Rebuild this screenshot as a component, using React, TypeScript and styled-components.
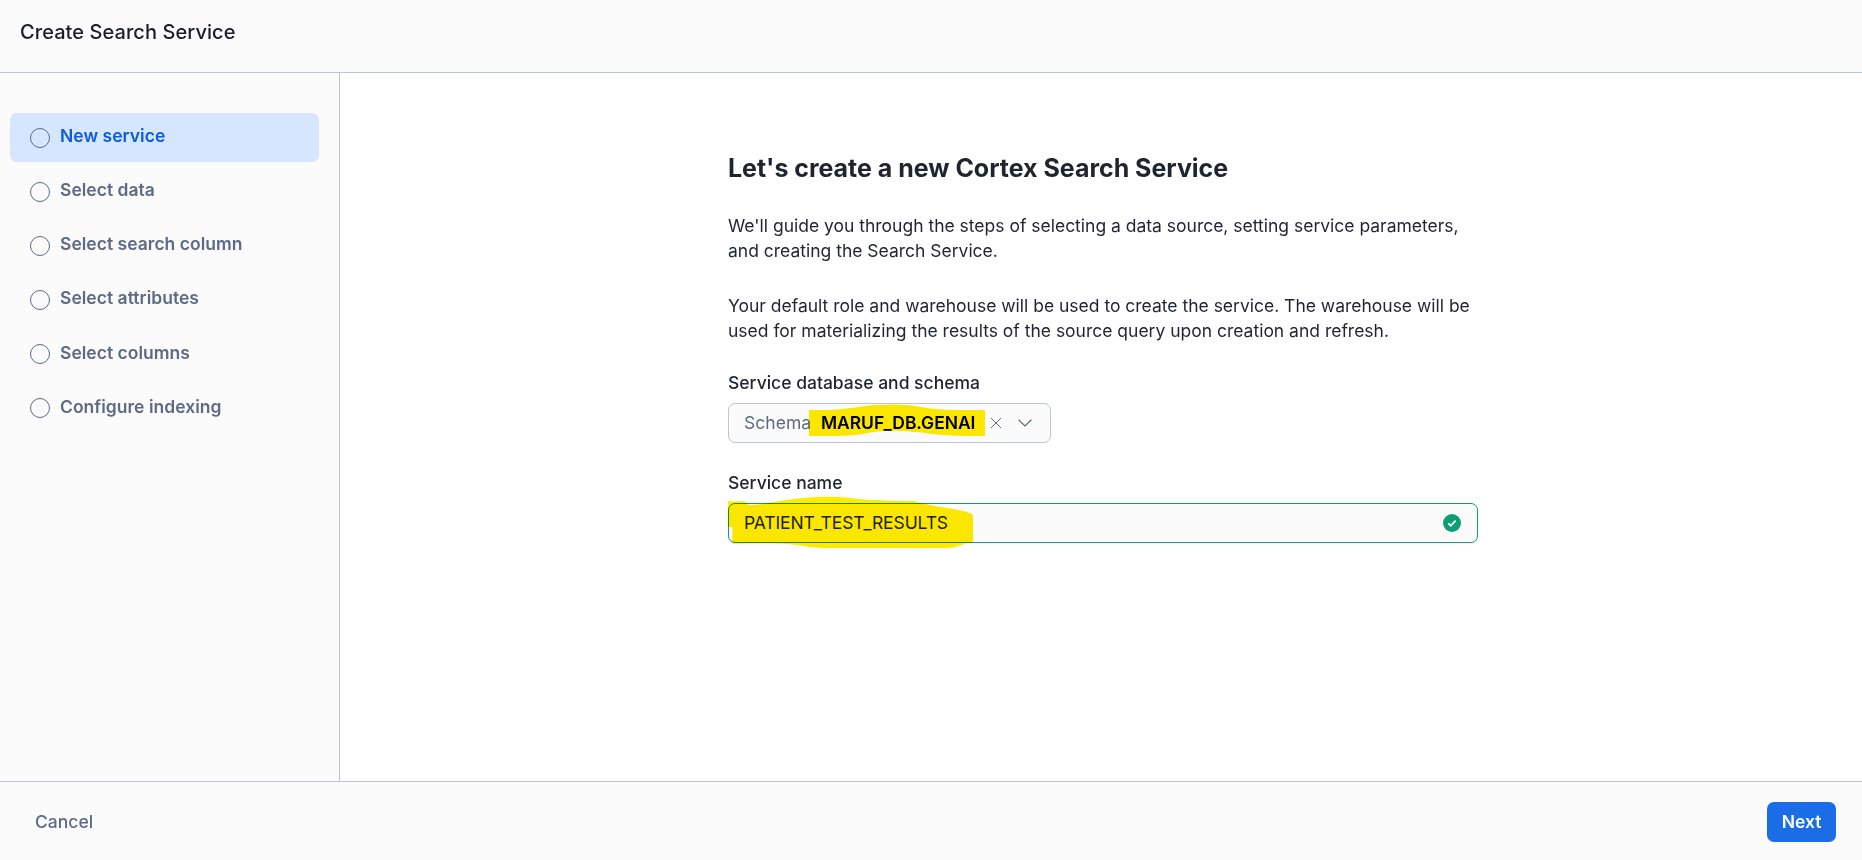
import React from "react";
import styled, { createGlobalStyle } from "styled-components";

const GlobalStyle = createGlobalStyle`
  *, *::before, *::after { box-sizing: border-box; }
  html, body, #root { height: 100%; margin: 0; }
  body {
    background: #fff;
    color: #1e252f;
    font-family: Inter, "Liberation Sans", sans-serif;
    font-size: 17.5px;
    line-height: 25px;
  }
  button { font: inherit; border: 0; background: none; padding: 0; cursor: pointer; }
`;

const Page = styled.div`
  display: flex;
  flex-direction: column;
  height: 860px;
  overflow: hidden;
`;

const Header = styled.header`
  flex: none;
  height: 73px;
  padding: 19px 20px 0;
  background: #fbfbfb;
  border-bottom: 1px solid #bdc4d9;
`;

const PageTitle = styled.h1`
  margin: 0;
  font-size: 20px;
  line-height: 26px;
  font-weight: 500;
  letter-spacing: 0.07px;
  color: #191e24;
`;

const Body = styled.div`
  flex: 1;
  display: flex;
  min-height: 0;
`;

const Sidebar = styled.nav`
  flex: none;
  width: 340px;
  padding: 40px 20px 0 10px;
  background: #fbfbfb;
  border-right: 1px solid #bdc4d9;
`;

const StepList = styled.ol`
  list-style: none;
  margin: 0;
  padding: 0;
  display: flex;
  flex-direction: column;
  gap: 5px;
`;

const StepLabel = styled.span``;

const Step = styled.li<{ $active?: boolean }>`
  display: flex;
  gap: 10px;
  height: 49px;
  padding: 10px 20px 0;
  border-radius: 7px;
  font-weight: 600;
  letter-spacing: 0.02px;
  color: ${(p) => (p.$active ? "#0b5cde" : "#5d6a85")};
  background: ${(p) => (p.$active ? "#d6e6ff" : "transparent")};

  &:nth-child(n + 5) ${StepLabel} { padding-top: 1px; }
`;

const StepCircle = styled.span`
  width: 20px;
  height: 20px;
  margin-top: 5px;
  border: 1px solid #5d6a85;
  border-radius: 50%;
`;

const Main = styled.main`
  flex: 1;
  padding: 78px 0 0 388px;
`;

const Form = styled.section`
  width: 750px;
`;

const Heading = styled.h2`
  margin: 0 0 27px;
  font-size: 25px;
  line-height: 35px;
  font-weight: 700;
  letter-spacing: -0.02px;
`;

const Paragraph = styled.p`
  margin: 0 0 30px;
  color: #1e252f;
  letter-spacing: -0.007px;
  white-space: nowrap;

  &:last-of-type { margin-bottom: 27px; }
`;

const Field = styled.div`
  display: flex;
  flex-direction: column;
  align-items: flex-start;
  margin-bottom: 27px;
`;

const Label = styled.label`
  margin-bottom: 8px;
  font-weight: 500;
`;

const Control = styled.div<{ $valid?: boolean }>`
  position: relative;
  display: flex;
  align-items: center;
  width: ${(p) => (p.$valid ? "750px" : "323px")};
  height: 40px;
  padding: 0 16px 0 15px;
  border: 1px solid ${(p) => (p.$valid ? "#0f9d76" : "#bdc4d9")};
  border-radius: 7px;
  background: #fbfbfb;
`;

const Prefix = styled.span`
  width: 77px;
  padding-bottom: 2px;
  letter-spacing: 0.05px;
  color: #5d6a85;
`;

const SchemaValue = styled.span`
  width: 169px;
  padding-bottom: 2px;
  font-weight: 600;
  letter-spacing: -0.06px;
  color: #000;
`;

const Value = styled.span`
  flex: 1;
  padding-bottom: 2px;
  letter-spacing: -0.11px;
`;

const ClearIcon = styled.svg`
  flex: none;
  width: 12px;
  height: 12px;
`;

const ChevronIcon = styled.svg`
  flex: none;
  width: 14px;
  height: 8px;
  margin-left: 16px;
`;

const CheckIcon = styled.svg`
  flex: none;
  width: 18px;
  height: 18px;
`;

/* Marker stroke laid over a control */
const Marker = styled.svg<{ $left: number; $top: number }>`
  position: absolute;
  left: ${(p) => p.$left}px;
  top: ${(p) => p.$top}px;
  fill: #ffea00;
  mix-blend-mode: multiply;
  pointer-events: none;
`;

const Footer = styled.footer`
  flex: none;
  display: flex;
  align-items: center;
  justify-content: space-between;
  height: 79px;
  padding: 2px 26px 0 35px;
  background: #fbfbfb;
  border-top: 1px solid #bdc4d9;
`;

const CancelButton = styled.button`
  && {
    padding-bottom: 2px;
    font-weight: 500;
  }
  color: #5d6a85;
`;

const NextButton = styled.button`
  && {
    width: 69px;
    height: 40px;
    padding-bottom: 2px;
    font-weight: 600;
    color: #fff;
    background: #1a6ce7;
    border-radius: 7px;
  }
`;

const steps = [
  "New service",
  "Select data",
  "Select search column",
  "Select attributes",
  "Select columns",
  "Configure indexing",
];

export default function App() {
  return (
    <>
      <GlobalStyle />
      <Page>
        <Header>
          <PageTitle>Create Search Service</PageTitle>
        </Header>
        <Body>
          <Sidebar>
            <StepList>
              {steps.map((name, i) => (
                <Step key={name} $active={i === 0}>
                  <StepCircle />
                  <StepLabel>{name}</StepLabel>
                </Step>
              ))}
            </StepList>
          </Sidebar>
          <Main>
            <Form>
              <Heading>Let's create a new Cortex Search Service</Heading>
              <Paragraph>
                We'll guide you through the steps of selecting a data source, setting service parameters,
                <br />
                and creating the Search Service.
              </Paragraph>
              <Paragraph>
                Your default role and warehouse will be used to create the service. The warehouse will be
                <br />
                used for materializing the results of the source query upon creation and refresh.
              </Paragraph>
              <Field>
                <Label>Service database and schema</Label>
                <Control>
                  <Prefix>Schema</Prefix>
                  <SchemaValue>MARUF_DB.GENAI</SchemaValue>
                  <ClearIcon viewBox="0 0 12 12" fill="none" stroke="#5d6a85">
                    <path d="M1 1 11 11M11 1 1 11" />
                  </ClearIcon>
                  <ChevronIcon viewBox="0 0 14 8" fill="none" stroke="#5d6a85" strokeWidth="1.2">
                    <path d="M.6.8 7 7 13.4.8" />
                  </ChevronIcon>
                  <Marker $left={80} $top={0} width="178" height="34" viewBox="267 132 534 102">
                    <path d="M267 150H328Q385 146 420 140Q450 134 500 134Q560 133 590 139Q625 148 700 150H795V228H750Q660 227 610 218Q560 212 520 212Q475 211 440 220Q400 228 350 228H267Z" />
                  </Marker>
                </Control>
              </Field>
              <Field>
                <Label>Service name</Label>
                <Control $valid>
                  <Value>PATIENT_TEST_RESULTS</Value>
                  <CheckIcon viewBox="0 0 18 18">
                    <circle cx="9" cy="9" r="9" fill="#0f9d76" />
                    <path d="m5.3 9.3 2.5 2.4 4.8-5" fill="none" stroke="#fff" strokeWidth="1.8" />
                  </CheckIcon>
                  <Marker $left={-1} $top={-8} width="246" height="54" viewBox="24 408 738 162">
                    <path d="M24 424H72Q80 426 84 435Q125 435 160 426Q220 415 290 411Q340 409 390 413Q430 421 580 423Q605 432 700 447Q750 456 759 465V545Q735 549 715 559Q700 564 680 564H310Q270 562 230 555Q190 549 130 550L37 551V502L27 500H24Z" />
                  </Marker>
                </Control>
              </Field>
            </Form>
          </Main>
        </Body>
        <Footer>
          <CancelButton>Cancel</CancelButton>
          <NextButton>Next</NextButton>
        </Footer>
      </Page>
    </>
  );
}
